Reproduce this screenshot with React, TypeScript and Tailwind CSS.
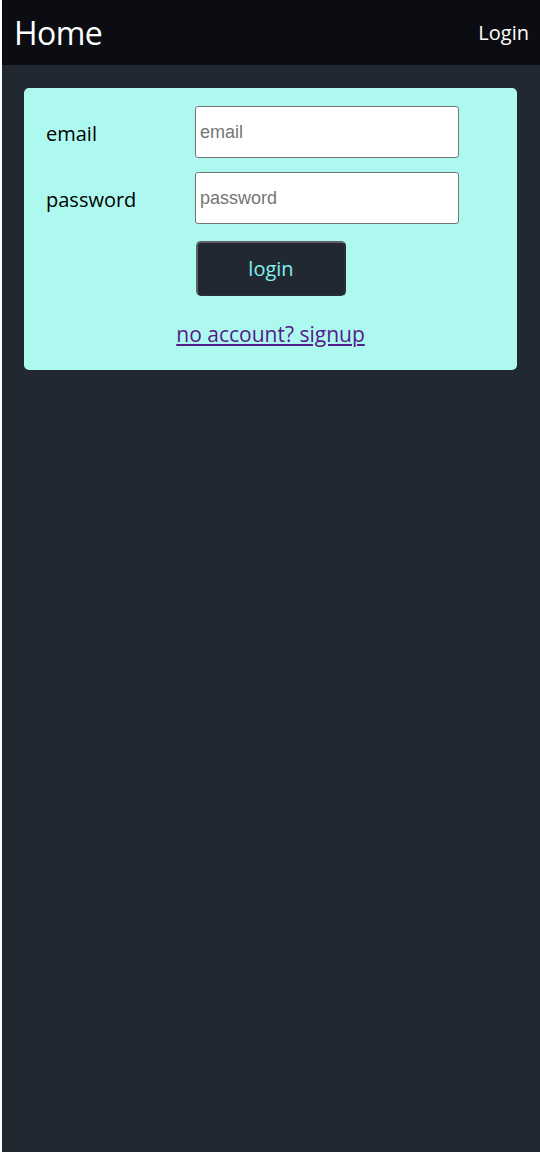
import React from "react";

export default function App() {
  const sans = { fontFamily: '"Open Sans", "Noto Sans", sans-serif' };
  return (
    <div className="min-h-[1152px] bg-white pl-[2px]" style={sans}>
      <div className="min-h-[1152px] bg-[#222831] flex flex-col">
        <header className="h-[65px] bg-[#0b0d12] flex items-center justify-between pl-[12px] pr-[11px]">
          <span className="text-[32px] text-white leading-none tracking-[-0.6px]">Home</span>
          <span className="text-[20px] text-white leading-none">Login</span>
        </header>
        <div className="pt-[23px] pl-[22px] pr-[23px]">
          <div className="bg-[#adf9ef] rounded-[5px] pt-[18px] pb-[19px] pl-[22px] flex flex-col">
            <div className="flex items-center h-[52px]">
              <label className="w-[149px] text-[20px] text-black pt-[3px]">email</label>
              <input
                placeholder="email"
                className="w-[264px] h-[52px] bg-white border border-[#767676] rounded-[3px] px-[4px] text-[18px] placeholder:text-[#757575] outline-none"
                style={{ fontFamily: '"Liberation Sans", Arial, sans-serif' }}
              />
            </div>
            <div className="flex items-center h-[52px] mt-[14px]">
              <label className="w-[149px] text-[20px] text-black pt-[3px]">password</label>
              <input
                placeholder="password"
                type="password"
                className="w-[264px] h-[52px] bg-white border border-[#767676] rounded-[3px] px-[4px] text-[18px] placeholder:text-[#757575] outline-none"
                style={{ fontFamily: '"Liberation Sans", Arial, sans-serif' }}
              />
            </div>
            <div className="pl-[150px] mt-[17px]">
              <button className="w-[150px] h-[55px] bg-[#222831] text-[#80f0ee] text-[20px] rounded-[5px] border-2 border-[#5f6166] border-r-[#2a2d33] border-b-[#2a2d33]">
                login
              </button>
            </div>
            <div className="mt-[23px] text-center pr-[22px]">
              <a href="#" className="text-[21px] text-[#551a8b] underline underline-offset-[2px]">
                no account? signup
              </a>
            </div>
          </div>
        </div>
      </div>
    </div>
  );
}
